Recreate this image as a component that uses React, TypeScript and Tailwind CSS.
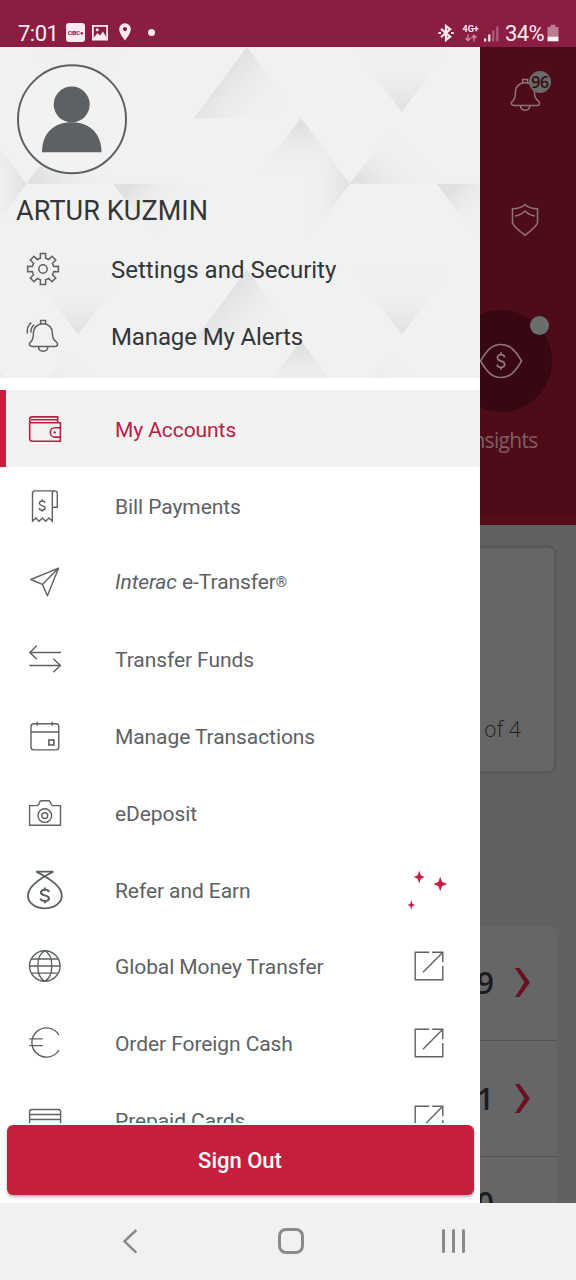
import type { ReactNode } from "react";

const DOLLAR =
  "M3.6 -3.4 C3.4 -5 2 -5.8 0 -5.8 C-2.2 -5.8 -3.6 -4.7 -3.6 -3 C-3.6 -1 -2 -0.6 0 0 C2.2 0.6 3.7 1.1 3.7 3 C3.7 4.8 2.2 5.8 0 5.8 C-2.2 5.8 -3.7 4.9 -3.8 3.2 M0 -8 V-5.8 M0 5.8 V8";

const BELL =
  "M17.6 8.2 V4.6 H22.6 V8.2 M10.4 17.2 C10.4 11.5 14.5 7.8 20 7.8 C25.500 7.800 29.400 11.500 29.400 17.200 C29.400 22 30.500 24 33.200 25.800 C35.700 27.600 34.600 30.400 32.200 30.400 H8.800 C6.300 30.400 5.200 27.600 7.700 25.800 C9.700 24.200 10.400 22 10.400 17.200 Z M15.500 30.600 C15.500 33.600 17.300 35.300 20.100 35.300 C22.900 35.300 24.800 33.600 24.800 30.600";

function gearPath() {
  const teeth = 8;
  const point = (r: number, a: number) =>
    `${(20 + r * Math.cos(a)).toFixed(2)} ${(20 + r * Math.sin(a)).toFixed(2)}`;
  let d = "";
  for (let i = 0; i < teeth; i++) {
    const a = (i * 2 * Math.PI) / teeth;
    d += `${i === 0 ? "M" : "A11 11 0 0 1 "}${point(11, a - 0.24)} L${point(15.6, a - 0.17)} L${point(15.6, a + 0.17)} L${point(11, a + 0.24)} `;
  }
  return d + `A11 11 0 0 1 ${point(11, -0.24)} Z`;
}

function Icon({ children, width = 1.4 }: { children: ReactNode; width?: number }) {
  return (
    <svg
      viewBox="0 0 40 40"
      className="size-10 shrink-0"
      fill="none"
      stroke="currentColor"
      strokeWidth={width}
    >
      {children}
    </svg>
  );
}

function ExternalIcon() {
  return (
    <Icon>
      <path d="M20.200 6.200 H6.200 V33.800 H33.800 V20 M23.200 6.200 H33.800 V16.300 M33.800 6.200 L14 26.300" />
    </Icon>
  );
}

function star(x: number, y: number, w: number, h: number) {
  const k = 0.27;
  return `M${x} ${y - h} L${x + w * k} ${y - h * k} L${x + w} ${y} L${x + w * k} ${y + h * k} L${x} ${y + h} L${x - w * k} ${y + h * k} L${x - w} ${y} L${x - w * k} ${y - h * k} Z`;
}

function Sparkles() {
  return (
    <svg viewBox="0 0 44 44" className="size-11 shrink-0" fill="#c41f3e">
      <path d={star(14.2, 9, 5.6, 6.4)} />
      <path d={star(35.2, 16, 7, 7.3)} />
      <path d={star(6.3, 37, 3.8, 4.7)} />
    </svg>
  );
}

type Item = { label: ReactNode; icon: ReactNode; end?: ReactNode; active?: boolean };

const items: Item[] = [
  {
    label: "My Accounts",
    active: true,
    icon: (
      <Icon width={1.6}>
        <path d="M32.700 13.800 V7.900 H7 Q4.700 7.900 4.700 10.200 V29.500 Q4.700 32.200 7.400 32.200 H35.400 V13.800 H6.500 Q4.700 13.600 4.700 11 M6 10.800 H32.700" />
        <path d="M35.400 18.700 H30 A4.700 4.700 0 0 0 30 28.100 H35.400" />
        <circle cx="29.700" cy="23.400" r="1.200" fill="currentColor" stroke="none" />
      </Icon>
    ),
  },
  {
    label: "Bill Payments",
    icon: (
      <Icon>
        <path d="M29.800 4.900 H10 Q7.500 4.900 7.500 7.400 V35.200 L10.800 32 L14 35.200 L17.400 32 L20.700 35.200 L24 32 L27.300 35.200 V7.500 Q27.300 4.900 29.800 4.900 Q32.300 4.900 32.300 7.500 V21.200 H27.300" />
        <path d={DOLLAR} transform="translate(17.2 19.6) scale(.78)" strokeWidth="1.800" />
      </Icon>
    ),
  },
  {
    label: (
      <>
        <i>Interac</i> e-Transfer<span className="relative top-[-2px] text-[14.500px]">®</span>
      </>
    ),
    icon: (
      <Icon>
        <path d="M33.600 6.100 L5.800 17.500 L17.400 22.400 L22.400 33.800 Z M17.400 22.400 L33.600 6.100" strokeLinejoin="round" />
      </Icon>
    ),
  },
  {
    label: "Transfer Funds",
    icon: (
      <Icon>
        <path d="M36 13.500 H4.700 M11.700 6.700 L4.900 13.500 L11.700 20.300 M4.300 26.500 H35.600 M28.300 19.800 L35.400 26.500 L28.300 33.300" />
      </Icon>
    ),
  },
  {
    label: "Manage Transactions",
    icon: (
      <Icon>
        <rect x="6" y="7.700" width="27.800" height="26.200" rx="2.800" />
        <path d="M6 16 H33.800 M12.300 5.800 V9.700 M27.200 5.800 V9.700" />
        <rect x="23.900" y="24" width="5" height="5" strokeWidth="1.600" />
      </Icon>
    ),
  },
  {
    label: "eDeposit",
    icon: (
      <Icon>
        <path d="M4.600 12.600 H12.500 Q14 12 14.500 9.500 Q15 7.700 16.500 7.700 H23.500 Q25 7.700 25.500 9.500 Q26 12 27.500 12.600 H35.500 V32.200 H4.600 Z" />
        <circle cx="19.800" cy="22.600" r="6.800" />
        <circle cx="19.800" cy="22.600" r="2.900" />
      </Icon>
    ),
  },
  {
    label: "Refer and Earn",
    end: <Sparkles />,
    icon: (
      <Icon width={1.800}>
        <path d="M19.700 6.200 L11.300 1.600 H28.300 Z" />
        <path d="M19.700 6.200 C13 10.500 3 17 3 25.700 C3 33 10.500 38.400 19.700 38.400 C29 38.400 36.800 33 36.800 25.700 C36.800 17 26.500 10.500 19.700 6.200 Z" />
        <path d={DOLLAR} transform="translate(19.9 25.4) scale(1.1 .98)" strokeWidth="2" />
      </Icon>
    ),
  },
  {
    label: "Global Money Transfer",
    end: <ExternalIcon />,
    icon: (
      <Icon>
        <circle cx="19.800" cy="20" r="15.300" />
        <path d="M19.800 4.700 C10.500 9.500 10.500 30.500 19.800 35.300 C29.100 30.500 29.100 9.500 19.800 4.700 M6.200 13 H33.400 M4.500 20 H35.100 M6.200 27.100 H33.400" />
      </Icon>
    ),
  },
  {
    label: "Order Foreign Cash",
    end: <ExternalIcon />,
    icon: (
      <Icon>
        <path d="M34 12 A14.600 14.600 0 1 0 34 27 M4.300 15.900 H17.800 M4.300 22.600 H17.800" />
      </Icon>
    ),
  },
  {
    label: "Prepaid Cards",
    end: <ExternalIcon />,
    icon: (
      <Icon>
        <rect x="4.600" y="9.500" width="31" height="22" rx="2.300" />
        <path d="M4.600 14.500 H35.600 M4.600 19.500 H35.600" />
      </Icon>
    ),
  },
];

function StatusBar() {
  return (
    <header className="flex h-[47px] shrink-0 items-end bg-[#8b1d42] pr-[17px] pb-[3px] pl-[18px] text-[#fbeaf1]">
      <span className="w-[48px] text-[22px] leading-[20px] tracking-[-0.500px]">7:01</span>
      <div className="mb-[2px] flex h-[19px] w-[19px] items-center justify-center rounded-[3px] bg-[#fbeaf1] text-[6px] font-bold tracking-[-0.300px] text-[#8b1d42]">
        CIBC●
      </div>
      <svg viewBox="0 0 16 16" className="mb-[3.500px] ml-[7px] size-4" fill="none">
        <rect x=".9" y=".9" width="14.200" height="13.700" stroke="#fbeaf1" strokeWidth="1.800" />
        <path d="M1.500 13 L5.500 8 L8 10.500 L11 6.500 L14.500 12.500 V14 H2 Z" fill="#fbeaf1" />
        <circle cx="5.200" cy="4.800" r="1.500" fill="#fbeaf1" />
      </svg>
      <svg viewBox="0 0 12 18" className="mb-[3px] ml-[11px] h-[18px] w-3" fill="#fbeaf1">
        <path fillRule="evenodd" d="M6 .3 A5.800 5.800 0 0 0 .2 6.200 C.2 10.300 6 17.500 6 17.500 S11.800 10.300 11.800 6.200 A5.800 5.800 0 0 0 6 .3 Z M6 4 a2.100 2.100 0 1 1 0 4.200 a2.100 2.100 0 1 1 0 -4.200" />
      </svg>
      <span className="mb-[8px] ml-[17px] size-[7px] rounded-full bg-[#fbeaf1]" />
      <span className="grow" />
      <svg viewBox="0 0 16 18" className="mr-[1px] mb-[2px] h-[18px] w-4" fill="none" stroke="#fbeaf1" strokeWidth="2.200">
        <path d="M3 4.800 L12.200 12.700 L8 16 V2 L12.200 5.300 L3 13.200" />
        <path d="M.3 9 h2.700 M13 9 h2.700" />
      </svg>
      <div className="mb-[2px] ml-[8px] flex w-[17px] flex-col">
        <span className="text-[9px] leading-[9px] font-bold">4G+</span>
        <svg viewBox="0 0 16 8" className="h-2 w-4" fill="none" stroke="#c98ba3" strokeWidth="1.400">
          <path d="M5 .5 V6.500 M2.500 4 L5 6.700 L7.500 4 M11 7.500 V1.500 M8.500 4 L11 1.300 L13.500 4" />
        </svg>
      </div>
      <svg viewBox="0 0 15 17" className="mb-[2px] ml-[4.500px] h-[17px] w-[15px]">
        <path d="M0 13.500 h2.200 V16.500 h-2.200 Z M4.200 9.500 h2.200 V16.500 h-2.200 Z" fill="#fbeaf1" />
        <path d="M8.200 5.500 h2.200 V16.500 h-2.200 Z M12.200 1.500 h2.200 V16.500 h-2.200 Z" fill="#ad5f7c" />
      </svg>
      <span className="ml-[6px] w-[42px] text-[22px] leading-[20px] tracking-[-0.600px]">34%</span>
      <svg viewBox="0 0 12 18" className="mb-[2.500px] h-[18px] w-3">
        <path d="M3.500 .8 h5 v2.200 h3 V12.500 H.5 V3 h3 Z" fill="#bd7c95" />
        <path d="M.5 12.500 h11 V17.300 H.5 Z" fill="#fdf4f8" />
      </svg>
    </header>
  );
}

function HeaderPattern() {
  const tiles = [
    [0, 0],
    [-324, 0],
    [0, 223],
    [-324, 223],
  ];
  const stops = (
    <>
      <stop offset="0" stopColor="#dee1e0" />
      <stop offset="1" stopColor="#f1f1f1" stopOpacity="0" />
    </>
  );
  return (
    <svg viewBox="0 47 480 331" className="absolute inset-0 h-full w-full">
      <defs>
        <linearGradient id="down" gradientUnits="userSpaceOnUse" x1="0" y1="112" x2="0" y2="46">{stops}</linearGradient>
        <linearGradient id="peak" gradientUnits="userSpaceOnUse" x1="222" y1="72" x2="275" y2="120">{stops}</linearGradient>
        <linearGradient id="top" gradientUnits="userSpaceOnUse" x1="0" y1="125" x2="0" y2="177">{stops}</linearGradient>
        <linearGradient id="side" gradientUnits="userSpaceOnUse" x1="350" y1="0" x2="308" y2="0">{stops}</linearGradient>
        <linearGradient id="base" gradientUnits="userSpaceOnUse" x1="368" y1="190" x2="412" y2="145">{stops}</linearGradient>
        <linearGradient id="corner" gradientUnits="userSpaceOnUse" x1="455" y1="184" x2="492" y2="220">{stops}</linearGradient>
      </defs>
      {tiles.map(([x, y]) => (
        <g key={`${x},${y}`} transform={`translate(${x} ${y})`}>
          <path d="M353 47 H451 L402 112 Z" fill="url(#down)" />
          <path d="M247 47 L194 118 H300 Z" fill="url(#peak)" />
          <path d="M301 118 L257 177 H345 Z" fill="url(#top)" />
          <path d="M350 184 L308 128 V240 Z" fill="url(#side)" />
          <path d="M350 184 L400 118 L452 184 Z" fill="url(#base)" />
          <path d="M437 184 H541 L489 254 Z" fill="url(#corner)" />
        </g>
      ))}
    </svg>
  );
}

function Drawer() {
  return (
    <aside className="flex w-[480px] shrink-0 flex-col bg-white">
      <section className="relative h-[330.500px] shrink-0 overflow-hidden bg-[#f1f1f1] text-[#333638]">
        <HeaderPattern />
        <div className="relative flex flex-col">
          <svg viewBox="0 0 112 112" className="mt-[16px] ml-[16px] size-28" fill="#5d6163">
            <circle cx="56" cy="56.300" r="54" fill="#f2f2f2" stroke="#5d6163" strokeWidth="2" />
            <circle cx="55.700" cy="41.400" r="18" />
            <path d="M26 89.300 C26 70 38 59.300 55.700 59.300 C73 59.300 85.500 70 85.500 89.300 Z" />
          </svg>
          <h1 className="mt-[20px] ml-[16px] text-[27px] leading-[32px] tracking-[0.100px]">ARTUR KUZMIN</h1>
          <div className="mt-[9px] ml-[23px] flex h-[67px] items-center gap-[48px] text-[24px]">
            <span className="mb-[2px] text-[#5d6163]">
              <Icon width={1.500}>
                <path d={gearPath()} />
                <circle cx="20" cy="20" r="4.200" />
              </Icon>
            </span>
            Settings and Security
          </div>
          <div className="ml-[23px] flex h-[67px] items-center gap-[48px] text-[24px] tracking-[-0.120px]">
            <span className="mb-[2px] text-[#5d6163]">
              <Icon width={1.500}>
                <path d={BELL} />
                <path d="M4.400 17.500 C3.800 13 5.200 9 8.400 6.600 M8 16.500 C7.700 13 8.800 10.500 11.200 8.800" />
              </Icon>
            </span>
            Manage My Alerts
          </div>
        </div>
      </section>
      <nav className="min-h-0 flex-1 overflow-hidden pt-[12.900px]">
        {items.map((item, i) => (
          <div
            key={i}
            className={
              item.active
                ? "flex h-[76.800px] items-center border-l-[6px] border-[#c41f3e] bg-[#f2f2f2] pl-[19px] text-[#b5213f]"
                : "flex h-[76.800px] items-center pl-[25px] text-[#5d6163]"
            }
          >
            {item.icon}
            <span className="ml-[50px] flex-1 pt-[2px] text-[21px] leading-[30px] tracking-[-0.080px]">{item.label}</span>
            <span className="mr-[31px]">{item.end}</span>
          </div>
        ))}
      </nav>
      <div className="flex h-[80px] shrink-0 px-[6.500px] pt-[2px] pb-[8px]">
        <button className="flex-1 rounded-[6px] bg-[#c41f3e] text-[22px] font-medium text-white shadow-[0_2px_3px_rgba(0,0,0,0.3)]">
          Sign Out
        </button>
      </div>
    </aside>
  );
}

function AccountRow({ amount }: { amount: string }) {
  return (
    <div className="flex h-[115.700px] items-center justify-end border-b-[1.500px] border-[#525252] pr-[27px]">
      <span className="text-[30px] font-semibold tracking-[-3px] text-[#1a1c1d]">{amount}</span>
      <svg viewBox="0 0 15 29" className="ml-[24px] h-[29px] w-[15px]" fill="#6b1020">
        <path d="M0 0 H4.500 L15 14.500 L4.500 29 H0 L9.500 14.500 Z" />
      </svg>
    </div>
  );
}

function Backdrop() {
  return (
    <main className="flex w-24 flex-col overflow-hidden bg-[#616161] font-['Open_Sans',sans-serif]">
      <section className="flex h-[478px] shrink-0 flex-col border-b-[10px] border-[#540d17] bg-[#4e0c19] text-[#8d7478]">
        <div className="relative mt-[28px] ml-[24.500px] size-10">
          <Icon width={1.500}>
            <path d={BELL} />
          </Icon>
          <span className="absolute top-[-4px] left-[24.500px] flex size-[22px] items-center justify-center rounded-full bg-[#666b69] text-[16px] font-semibold tracking-[-0.500px] text-[#3a0913]">
            96
          </span>
        </div>
        <svg viewBox="0 0 28 34" className="mt-[88px] ml-[31px] h-[34px] w-7" fill="none" stroke="currentColor" strokeWidth="1.500">
          <path d="M14 1.500 C11 4.500 6 5.700 1.500 5.700 V20 C3 24 8 27.500 14 32.300 C20 27.500 25 24 26.500 20 V5.700 C22 5.700 17 4.500 14 1.500 Z M4 13 C8 12.500 11.500 10.500 14 8 C16.500 10.500 20 12.500 24 13" />
        </svg>
        <div className="relative mt-[72.500px] ml-[-30px] flex size-[102px] shrink-0 items-center justify-center rounded-full bg-[#380711]">
          <svg viewBox="0 0 44 36" className="h-9 w-11" fill="none" stroke="currentColor" strokeWidth="1.600">
            <path d="M1.500 18 C8 7 13 1.500 22 1.500 C31 1.500 36 7 42.500 18 C36 29 31 34.500 22 34.500 C13 34.500 8 29 1.500 18 Z" />
            <path d={DOLLAR} transform="translate(22 18) scale(1 1.1)" strokeWidth="1.800" />
          </svg>
          <span className="absolute top-[6px] left-[80px] size-[19px] rounded-full bg-[#6a6f6e]" />
        </div>
        <span className="mt-[13px] mr-[38.500px] ml-[-63px] text-right text-[21px] leading-[30px] tracking-[-0.700px] text-[#7d5f64]">
          Insights
        </span>
      </section>
      <section className="mt-[20px] mr-[19px] ml-[-20px] flex h-[229px] shrink-0 items-end justify-end rounded-[9px] border-[3px] border-[#595959] bg-[#666] pr-[33px] pb-[25px] text-[21.500px] leading-[34px] font-light text-[#222]">
        of 4
      </section>
      <section className="mt-[151.500px] mr-[19px] ml-[-80px] shrink-0 rounded-t-[10px] bg-[#666]">
        <AccountRow amount="$79" />
        <AccountRow amount="$51" />
        <div className="flex h-[115.700px] justify-end pt-[25px] pr-[63px] text-[30px] leading-[41px] font-semibold text-[#1a1c1d]">
          $0
        </div>
      </section>
    </main>
  );
}

export default function App() {
  return (
    <div className="flex h-[1280px] w-[576px] flex-col overflow-hidden bg-white font-[Roboto,'Liberation_Sans',sans-serif]">
      <StatusBar />
      <div className="flex h-[1156px] shrink-0 overflow-hidden">
        <Drawer />
        <Backdrop />
      </div>
      <footer className="flex flex-1 items-start bg-[#f1f1f1] pt-[25px] pl-[122px]">
        <svg viewBox="0 0 16 26" className="h-[26px] w-4" fill="none" stroke="#8a8a8a" strokeWidth="2.500">
          <path d="M14.300 2 L2.500 13.300 L14.300 24.600" />
        </svg>
        <span className="ml-[140px] size-[26px] rounded-[8px] border-[3px] border-[#8a8a8a]" />
        <div className="mt-[1px] ml-[138px] flex h-6 gap-[7px]">
          <span className="w-[3px] rounded-full bg-[#8a8a8a]" />
          <span className="w-[3px] rounded-full bg-[#8a8a8a]" />
          <span className="w-[3px] rounded-full bg-[#8a8a8a]" />
        </div>
      </footer>
    </div>
  );
}
